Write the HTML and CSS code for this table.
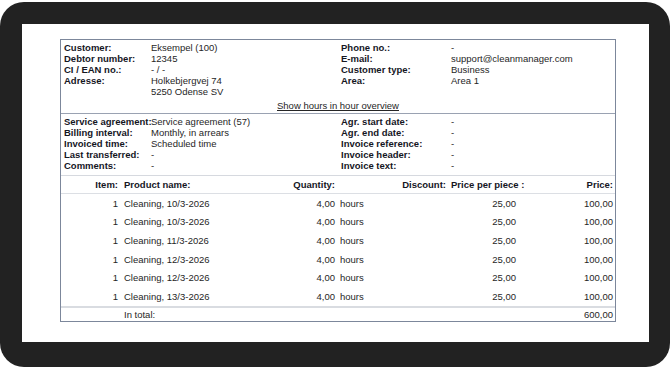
FILE: index.html
```html
<!DOCTYPE html>
<html>
<head>
<meta charset="utf-8">
<link rel="stylesheet" href="styles.css">
</head>
<body>
<div class="frame">
  <div class="sheet">
    <div class="box">
      <div class="info first">
        <div class="lbl">Customer:</div><div class="val">Eksempel (100)</div>
        <div class="lbl">Phone no.:</div><div class="val">-</div>
        <div class="lbl">Debtor number:</div><div class="val">12345</div>
        <div class="lbl">E-mail:</div><div class="val">support@cleanmanager.com</div>
        <div class="lbl">CI / EAN no.:</div><div class="val">- / -</div>
        <div class="lbl">Customer type:</div><div class="val">Business</div>
        <div class="lbl">Adresse:</div><div class="val">Holkebjergvej 74</div>
        <div class="lbl">Area:</div><div class="val">Area 1</div>
        <div class="lbl"></div><div class="val">5250 Odense SV</div>
        <div class="lbl"></div><div class="val"></div>
      </div>
      <div class="linkrow"><a class="link" href="#">Show hours in hour overview</a></div>
      <div class="info second">
        <div class="lbl">Service agreement:</div><div class="val">Service agreement (57)</div>
        <div class="lbl">Agr. start date:</div><div class="val">-</div>
        <div class="lbl">Billing interval:</div><div class="val">Monthly, in arrears</div>
        <div class="lbl">Agr. end date:</div><div class="val">-</div>
        <div class="lbl">Invoiced time:</div><div class="val">Scheduled time</div>
        <div class="lbl">Invoice reference:</div><div class="val">-</div>
        <div class="lbl">Last transferred:</div><div class="val">-</div>
        <div class="lbl">Invoice header:</div><div class="val">-</div>
        <div class="lbl">Comments:</div><div class="val">-</div>
        <div class="lbl">Invoice text:</div><div class="val">-</div>
      </div>
      <div class="items">
        <div class="row head">
          <div class="c-item">Item:</div>
          <div class="c-name">Product name:</div>
          <div class="c-qty">Quantity:</div>
          <div class="c-unit"></div>
          <div class="c-disc">Discount:</div>
          <div class="c-ppp head-ppp">Price per piece :</div>
          <div class="c-price">Price:</div>
        </div>
        <div class="row">
          <div class="c-item">1</div><div class="c-name">Cleaning, 10/3-2026</div><div class="c-qty">4,00</div><div class="c-unit">hours</div><div class="c-disc"></div><div class="c-ppp">25,00</div><div class="c-price">100,00</div>
        </div>
        <div class="row">
          <div class="c-item">1</div><div class="c-name">Cleaning, 10/3-2026</div><div class="c-qty">4,00</div><div class="c-unit">hours</div><div class="c-disc"></div><div class="c-ppp">25,00</div><div class="c-price">100,00</div>
        </div>
        <div class="row">
          <div class="c-item">1</div><div class="c-name">Cleaning, 11/3-2026</div><div class="c-qty">4,00</div><div class="c-unit">hours</div><div class="c-disc"></div><div class="c-ppp">25,00</div><div class="c-price">100,00</div>
        </div>
        <div class="row">
          <div class="c-item">1</div><div class="c-name">Cleaning, 12/3-2026</div><div class="c-qty">4,00</div><div class="c-unit">hours</div><div class="c-disc"></div><div class="c-ppp">25,00</div><div class="c-price">100,00</div>
        </div>
        <div class="row">
          <div class="c-item">1</div><div class="c-name">Cleaning, 12/3-2026</div><div class="c-qty">4,00</div><div class="c-unit">hours</div><div class="c-disc"></div><div class="c-ppp">25,00</div><div class="c-price">100,00</div>
        </div>
        <div class="row">
          <div class="c-item">1</div><div class="c-name">Cleaning, 13/3-2026</div><div class="c-qty">4,00</div><div class="c-unit">hours</div><div class="c-disc"></div><div class="c-ppp">25,00</div><div class="c-price">100,00</div>
        </div>
        <div class="row total">
          <div class="c-item"></div><div class="c-name">In total:</div><div class="c-qty"></div><div class="c-unit"></div><div class="c-disc"></div><div class="c-ppp"></div><div class="c-price">600,00</div>
        </div>
      </div>
    </div>
  </div>
</div>
</body>
</html>
```

FILE: styles.css
```css
html, body {
  margin: 0;
  padding: 0;
  background: #ffffff;
}
body {
  font-family: "Liberation Sans", Arial, sans-serif;
  font-size: 9.5px;
  color: #222222;
}
.frame {
  margin-top: 2px;
  width: 670px;
  height: 365px;
  box-sizing: border-box;
  padding: 22px 21px 25px 22px;
  background: #222222;
  border-radius: 24px;
}
.sheet {
  background: #ffffff;
  height: 318px;
  box-sizing: border-box;
  padding: 15px 0 0 38px;
}
.box {
  width: 556px;
  height: 283px;
  box-sizing: border-box;
  border: 1px solid #7c879b;
}
.info {
  display: grid;
  grid-template-columns: 87px 190px 110px 1fr;
  grid-auto-rows: 11px;
  line-height: 11px;
  padding-left: 3px;
  white-space: nowrap;
}
.info.first {
  padding-top: 2px;
}
.info.second {
  padding-top: 2px;
  padding-bottom: 4px;
  border-bottom: 1px solid #d6d9df;
}
.lbl {
  font-weight: bold;
  color: #15161f;
}
.val {
  color: #262626;
}
.linkrow {
  text-align: center;
  line-height: 11px;
  margin-top: 3px;
  padding-bottom: 2px;
  border-bottom: 1px solid #9aa2b2;
}
.link {
  color: #262626;
  text-decoration: underline;
}
.items {
  display: flex;
  flex-direction: column;
}
.row {
  display: grid;
  grid-template-columns: 59px 160px 57px 53px 58px 72px 1fr;
  height: 18.6px;
  align-items: center;
  white-space: nowrap;
  color: #262626;
}
.row.head {
  height: 17px;
  font-weight: bold;
  color: #15161f;
  border-bottom: 1px solid #dcdfe4;
}
.row.total {
  height: 14px;
  border-top: 2px solid #d9dce1;
}
.c-item { text-align: right; padding-right: 2px; }
.c-name { padding-left: 4px; }
.c-qty { text-align: right; padding-right: 2px; }
.c-unit { padding-left: 3px; }
.c-disc { text-align: right; padding-right: 2px; }
.c-ppp { text-align: right; padding-right: 4px; }
.c-ppp.head-ppp { text-align: left; padding-left: 3px; padding-right: 0; }
.c-price { text-align: right; padding-right: 2px; }
```
